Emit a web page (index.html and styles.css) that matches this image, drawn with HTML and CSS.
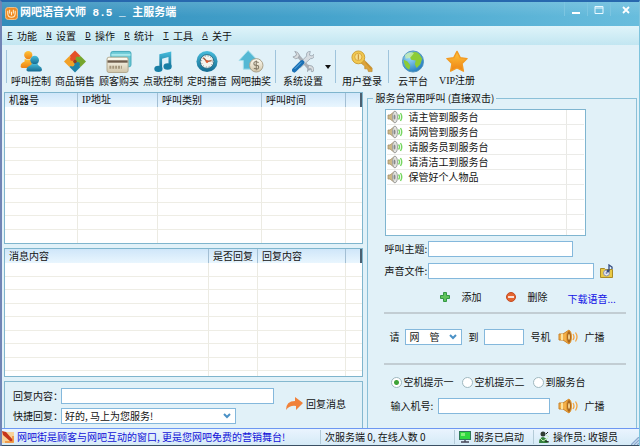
FILE: index.html
```html
<!DOCTYPE html>
<html lang="zh-CN">
<head>
<meta charset="utf-8">
<title>网吧语音大师 8.5 _ 主服务端</title>
<link rel="stylesheet" href="styles.css">
</head>
<body>
<svg class="defs" aria-hidden="true">
  <defs>
    <linearGradient id="g-blue" x1="0" y1="0" x2="0" y2="1"><stop offset="0" stop-color="#48bedd"/><stop offset="1" stop-color="#14698f"/></linearGradient>
    <linearGradient id="g-gold" x1="0" y1="0" x2="0" y2="1"><stop offset="0" stop-color="#ffc63a"/><stop offset="1" stop-color="#ee8114"/></linearGradient>
    <linearGradient id="g-sand" x1="0" y1="0" x2="0" y2="1"><stop offset="0" stop-color="#fffdf3"/><stop offset="1" stop-color="#d0c5a9"/></linearGradient>
    <radialGradient id="g-globe" cx=".35" cy=".3" r=".8"><stop offset="0" stop-color="#9fdcfa"/><stop offset="1" stop-color="#1975bb"/></radialGradient>
    <symbol id="horn" viewBox="0 0 20 16">
      <path d="M1 5h4l6-4q3 7 0 14l-6-4H1z" fill="#f3b04a" stroke="#c9822a"/>
      <path d="M4 5v6" stroke="#fce2a0" stroke-width="2"/>
      <ellipse cx="11" cy="8" rx="2.5" ry="6.5" fill="#a9671f" stroke="#e79a31"/>
      <ellipse cx="11" cy="8" rx="1" ry="3" fill="#f5d28d"/>
      <path d="M15 5q2 3 0 6M17.500 3.500q3 4.500 0 9" fill="none" stroke="#f2a340" stroke-width="1.300"/>
    </symbol>
    <symbol id="speaker" viewBox="0 0 16 14">
      <path d="M1 5h2l5-4v12L3 9H1z" fill="#cdb886" stroke="#a3916c" stroke-width=".8"/>
      <ellipse cx="8" cy="7" rx="2.500" ry="5.800" fill="#e2e2dd" stroke="#a2a2a2"/>
      <ellipse cx="7.500" cy="7" rx="1" ry="2.500" fill="#888"/>
      <path d="M11.500 4.500q2 2.500 0 5M13.500 3q2.500 4 0 8" fill="none" stroke="#76d660" stroke-width="1.400"/>
    </symbol>
  </defs>
</svg>
<div class="window">
  <header class="titlebar">
    <svg class="logo" viewBox="0 0 14 14"><rect x=".5" y=".5" width="13" height="13" rx="3" fill="#ef8b24" stroke="#f7c58b"/><path d="M3 4v3q0 4 4 4t4-4V4M5 3v4M7 5v4M9 3v4" fill="none" stroke="#fff0d0" stroke-width="1.100"/></svg>
    <h1>网吧语音大师 8.5 _ 主服务端</h1>
    <div class="controls">
      <button aria-label="最小化"><svg viewBox="0 0 12 10"><path d="M2 8h8" stroke="#fff" stroke-width="2"/></svg></button>
      <button aria-label="最大化"><svg viewBox="0 0 12 10"><path d="M2 1.500h8v7H2zM2 3h8" fill="none" stroke="#e9f8ff"/></svg></button>
      <button class="close" aria-label="关闭"><svg viewBox="0 0 12 10"><path d="M3 2l6 6M9 2L3 8" stroke="#fff" stroke-width="1.800"/></svg></button>
    </div>
  </header>
  <nav class="menu">
    <button><u>F</u>功能</button><button><u>N</u>设置</button><button><u>D</u>操作</button><button><u>R</u>统计</button><button><u>T</u>工具</button><button><u>A</u>关于</button>
  </nav>
  <div class="toolbar">
    <i class="sep"></i>
    <button><svg viewBox="0 0 24 24"><circle cx="9" cy="5" r="4.500" fill="url(#g-gold)"/><path d="M5 9q4 2 8 0l1 4v6H2q-2-1-1-4 1-2 4-3z" fill="url(#g-gold)"/><circle cx="16" cy="10.500" r="4.700" fill="url(#g-blue)"/><path d="M13 14q3 2 6 0 0 2 2 3 3 1 3 4 0 2-2 2H9q-2 0-2-2 0-3 3-4 3-1 3-3z" fill="url(#g-blue)"/></svg>呼叫控制</button>
    <button><svg viewBox="0 0 24 24"><path d="M12 0l6 6-6 6-6-6z" fill="#e5502a"/><path d="M6 6l6 6-6 6-6-6z" fill="#f2a127"/><path d="M18 6l6 6-6 6-6-6z" fill="#75a62d"/><path d="M12 12l6 6-6 6-6-6z" fill="#1f83a7"/><circle cx="9" cy="9" r="2.400" fill="#e5502a"/><circle cx="15" cy="9" r="2.400" fill="#75a62d"/><circle cx="9" cy="15" r="2.400" fill="#f2a127"/><circle cx="15" cy="15" r="2.400" fill="#1f83a7"/><path d="M10 12q0-2 2-2t2 2-2 2-2-2" fill="#943d20"/></svg>商品销售</button>
    <button><svg class="wide" viewBox="0 0 26 24"><rect x="4.500" y="1.500" width="21" height="16" rx="2" fill="#6ac9d6" stroke="#42a7b9"/><path d="M5 5h20" stroke="#a9e8ed" stroke-width="2"/><rect x=".5" y="7.500" width="22" height="16" rx="2" fill="url(#g-sand)" stroke="#b1a78e"/><path d="M1 12h21" stroke="#6e5d4c" stroke-width="2.500"/><path d="M3 18h13" stroke="#a3957b" stroke-width="3" stroke-dasharray="2 1"/></svg>顾客购买</button>
    <button><svg viewBox="0 0 24 24"><path d="M8 4l13-3v16h-3V7l-7 2v11H8z" fill="url(#g-blue)"/><ellipse cx="7" cy="20" rx="4.500" ry="3.500" fill="#187fa5"/><ellipse cx="17" cy="17.500" rx="4.500" ry="3.500" fill="#187fa5"/></svg>点歌控制</button>
    <button><svg viewBox="0 0 24 24"><circle cx="12" cy="12" r="11.500" fill="url(#g-blue)"/><circle cx="12" cy="12" r="7.500" fill="#f4f5ef" stroke="#286b82"/><circle cx="12" cy="12" r="6" fill="none" stroke="#778" stroke-dasharray="1 2.140"/><path d="M12 12L8 8M12 12l5-1" stroke="#a35b3d" stroke-width="1.500"/><circle cx="12" cy="12" r="1.500" fill="#de5c33"/></svg>定时播音</button>
    <button><svg class="wide" viewBox="0 0 26 24"><path d="M10 .5L20 11h-5v9H5v-9H.5z" fill="#54b8d4" stroke="#a5dfeb"/><circle cx="18.500" cy="16" r="7" fill="url(#g-sand)" stroke="#a79f88"/><path d="M21 13q-5-2-5 1 0 2 2.500 2t2.500 2q0 3-5 1M18.500 11v10" fill="none" stroke="#847b67" stroke-width="1.100"/></svg>网吧抽奖</button>
    <i class="sep"></i>
    <button class="drop"><svg viewBox="0 0 24 24"><path d="M5 4l15 17" stroke="#a9afb6" stroke-width="3.500"/><path d="M3 1l3 1 2 3-1 3-3 1-3-2 3-1 1-2zM18 16l4 1 2 3-1 3-2 0 0-3-3 0-1 3z" fill="#d9dddf" stroke="#929aa3" stroke-width=".8"/><path d="M20 1l-1 4 3 1 2-2q1 5-4 5L9 19l-3-3L16 6q-1-5 4-5z" fill="#d6dce1" stroke="#929ea8" stroke-width=".8"/><path d="M2.500 21.500L11 13" stroke="#1970b5" stroke-width="5" stroke-linecap="round"/><path d="M3 20l7-7" stroke="#6cb7e6" stroke-width="1"/></svg>系统设置</button>
    <span class="arrow"></span>
    <i class="sep"></i>
    <button class="login"><svg viewBox="0 0 24 24"><path d="M13 9l10 10v4h-4l-1-3-3 0 0-3-5-4z" fill="#dca43b" stroke="#b98527" stroke-width=".7"/><circle cx="8" cy="7.500" r="7" fill="#f1c851" stroke="#cb9b2f"/><circle cx="8" cy="7" r="4" fill="#f8df8e" stroke="#d7a534"/><path d="M8 4v6M16 13l6 7" stroke="#c88e2d" stroke-width="1.200"/></svg>用户登录</button>
    <i class="sep"></i>
    <button><svg viewBox="0 0 24 24"><circle cx="12" cy="12" r="11.500" fill="url(#g-globe)" stroke="#4c91bc"/><path d="M10 3q5-3 9 1l3 5-2 6-4 4-2-4 1-4-5-1-2-4zM2 10l4 2 3 4-1 5q-5-2-6-9z" fill="#8ccc36"/><path d="M3 5q5-5 10-2L9 8 4 9z" fill="#c9edb2" opacity=".8"/></svg>云平台</button>
    <button><svg viewBox="0 0 24 24"><path d="M12 1l3.500 6.800 7.500 1-5.500 5.400 1.500 8.300-7-3.500-7 3.500 1.500-8.300L1 8.800l7.500-1z" fill="url(#g-gold)" stroke="#f29a22" stroke-linejoin="round" stroke-width="1.500"/></svg><span class="mixed">VIP注册</span></button>
  </div>
  <main>
    <div class="left">
      <div class="panel calls">
        <table>
          <colgroup><col class="c-no"><col class="c-ip"><col class="c-kind"><col class="c-time"><col></colgroup>
          <thead><tr><th>机器号</th><th class="mixed">IP地址</th><th>呼叫类别</th><th>呼叫时间</th><th></th></tr></thead>
          <tbody>
            <tr><td></td><td></td><td></td><td></td><td></td></tr><tr><td></td><td></td><td></td><td></td><td></td></tr>
            <tr><td></td><td></td><td></td><td></td><td></td></tr><tr><td></td><td></td><td></td><td></td><td></td></tr>
            <tr><td></td><td></td><td></td><td></td><td></td></tr><tr><td></td><td></td><td></td><td></td><td></td></tr>
            <tr><td></td><td></td><td></td><td></td><td></td></tr><tr><td></td><td></td><td></td><td></td><td></td></tr>
            <tr><td></td><td></td><td></td><td></td><td></td></tr><tr><td></td><td></td><td></td><td></td><td></td></tr>
          </tbody>
        </table>
      </div>
      <div class="panel messages">
        <table>
          <colgroup><col class="c-msg"><col class="c-done"><col class="c-reply"><col></colgroup>
          <thead><tr><th>消息内容</th><th>是否回复</th><th>回复内容</th><th></th></tr></thead>
          <tbody>
            <tr><td></td><td></td><td></td><td></td></tr><tr><td></td><td></td><td></td><td></td></tr>
            <tr><td></td><td></td><td></td><td></td></tr><tr><td></td><td></td><td></td><td></td></tr>
            <tr><td></td><td></td><td></td><td></td></tr><tr><td></td><td></td><td></td><td></td></tr>
            <tr><td></td><td></td><td></td><td></td></tr><tr><td></td><td></td><td></td><td></td></tr>
            <tr class="rest"><td></td><td></td><td></td><td></td></tr>
          </tbody>
        </table>
      </div>
      <form class="reply">
        <div class="fields">
          <label for="content">回复内容：</label><input id="content" type="text">
          <label for="quick">快捷回复：</label>
          <select id="quick"><option>好的, 马上为您服务!</option></select>
        </div>
        <button type="button" class="plain"><svg class="send" viewBox="0 0 18 14"><path d="M10 0l8 6-7 7V9Q5 8 1 13 1 4 10 4z" fill="#f0813a"/></svg>回复消息</button>
      </form>
    </div>
    <fieldset class="right">
      <legend>服务台常用呼叫 (直接双击)</legend>
      <ul class="list">
        <li><svg><use href="#speaker"/></svg><span>请主管到服务台</span></li>
        <li><svg><use href="#speaker"/></svg><span>请网管到服务台</span></li>
        <li><svg><use href="#speaker"/></svg><span>请服务员到服务台</span></li>
        <li><svg><use href="#speaker"/></svg><span>请清洁工到服务台</span></li>
        <li><svg><use href="#speaker"/></svg><span>保管好个人物品</span></li>
        <li></li><li></li><li></li>
      </ul>
      <div class="row topic"><label for="topic">呼叫主题:</label><input id="topic" type="text"></div>
      <div class="row file"><label for="file">声音文件:</label><input id="file" type="text">
        <button type="button" class="plain" aria-label="浏览"><svg class="folder" viewBox="0 0 14 14"><path d="M.5 4.500h4l1 1h7v8H.5z" fill="#e9c944" stroke="#a98b27"/><circle cx="6.500" cy="9" r="3" fill="#e8eaf0" stroke="#8a8fa8"/><circle cx="6.500" cy="9" r="1" fill="#7b83bd"/><path d="M9 7V1l3 2v2" fill="none" stroke="#334a80" stroke-width="1.300"/><circle cx="8" cy="7" r="1.500" fill="#334a80"/></svg></button></div>
      <div class="row actions">
        <button type="button" class="plain"><svg class="small" viewBox="0 0 10 10"><path d="M3.500.5h3v3h3v3h-3v3h-3v-3h-3v-3h3z" fill="#5fc35b" stroke="#329744"/></svg>添加</button>
        <button type="button" class="plain"><svg class="small" viewBox="0 0 10 10"><circle cx="5" cy="5" r="4.500" fill="#e5652f" stroke="#c24b22"/><path d="M2 5h6" stroke="#fff" stroke-width="1.600"/></svg>删除</button>
        <a href="#">下载语音...</a>
      </div>
      <hr>
      <div class="row page">
        <label for="role">请</label>
        <select id="role"><option>网　管</option></select>
        <label for="seat">到</label><input id="seat" type="text"><span>号机</span>
        <button type="button" class="plain cast"><svg class="horn"><use href="#horn"/></svg>广播</button>
      </div>
      <hr>
      <div class="row radios">
        <label><input type="radio" name="tip" checked>空机提示一</label>
        <label><input type="radio" name="tip">空机提示二</label>
        <label><input type="radio" name="tip">到服务台</label>
      </div>
      <div class="row number">
        <label for="number">输入机号:</label><input id="number" type="text">
        <button type="button" class="plain cast"><svg class="horn"><use href="#horn"/></svg>广播</button>
      </div>
    </fieldset>
  </main>
  <footer>
    <div class="slogan"><svg viewBox="0 0 12 12"><path d="M0 1h12v11H0z" fill="#f8d39a"/><path d="M0 0l4 1 7 8-2 2-8-7z" fill="#c5341c"/><path d="M3 11h8V5" fill="none" stroke="#ed8b33" stroke-width="1.500"/></svg>网吧街是顾客与网吧互动的窗口, 更是您网吧免费的营销舞台!</div>
    <div class="count">次服务端 0, 在线人数 0</div>
    <div class="state"><svg viewBox="0 0 12 12"><rect x=".5" y=".5" width="11" height="8" fill="#2fd73f" stroke="#31795a"/><path d="M6 9v2M2 11h8" stroke="#445" stroke-width="1.300"/><path d="M2 2h4v3H2z" fill="#84f07a"/></svg>服务已启动</div>
    <div class="operator"><svg viewBox="0 0 12 12"><circle cx="5" cy="3" r="2.500" fill="#303c32"/><path d="M1 12q0-6 4-6 3 0 5 6z" fill="#35823e"/><path d="M2 7l3 3 5-3M8 4l3 2" stroke="#c8edba" fill="none"/><path d="M7 10l4 1M8 3l2-2" stroke="#222"/></svg>操作员: 收银员</div>
    <svg class="grip" viewBox="0 0 8 8"><path d="M0 8l8-8M3 8l5-5M6 8l2-2" stroke="#8ca8cf" stroke-width="1.300"/></svg>
  </footer>
</div>
</body>
</html>
```
FILE: styles.css
```css
* { box-sizing: border-box; }

body {
  margin: 0;
  font: 10px/14px "Noto Sans CJK SC", sans-serif;
  color: #111;
  background: #3a4f63;
}

button, input, select {
  font: inherit;
  color: inherit;
  margin: 0;
  padding: 0;
}

button { background: none; border: 0; white-space: nowrap; }
svg { display: block; flex: none; }
.defs { position: absolute; width: 0; height: 0; }
.mixed { font-family: "Liberation Serif", "Noto Sans CJK SC", serif; }

.window {
  display: flex;
  flex-direction: column;
  min-height: 100vh;
  border: solid #3a4f63;
  border-width: 2px 1px 3px 2px;
  border-top-color: #2768ae;
  border-left-color: #7184b5;
  border-right-color: #7fc4dd;
  background: #e1f1f8;
}

/* Title bar */
.titlebar {
  display: flex;
  gap: 2px;
  height: 24px;
  padding-left: 3px;
  background: linear-gradient(#ffffff22, #ffffff00 60%), linear-gradient(90deg, #328dbb, #45a3cc 50%, #68bddd);
}
.logo { width: 13px; height: 13px; margin-top: 5px; }
h1 {
  flex: 1;
  margin: 0;
  font: bold 11px/22px "Liberation Mono", "Noto Sans CJK SC", monospace;
  color: #fff;
  white-space: pre;
}
.controls { display: flex; height: 14px; }
.controls button { width: 23px; padding: 2px 5px 0; border-left: 1px solid #7cc5e1; }
.controls svg { width: 12px; height: 10px; }
.controls .close { width: 29px; padding-left: 9px; }

/* Menu */
.menu {
  display: flex;
  gap: 9px;
  height: 19px;
  padding-left: 5px;
  background: linear-gradient(#dff4fa, #c2e6f1);
}
.menu button { display: flex; align-items: center; gap: 4px; }
.menu u { width: 6px; font: 9px/12px "Liberation Mono", monospace; }

/* Toolbar */
.toolbar {
  display: flex;
  height: 46px;
  padding: 5px 0 0 2px;
  background: #e1f1f8;
}
.toolbar button {
  display: flex;
  flex-direction: column;
  align-items: center;
  gap: 1px;
  width: 44px;
  line-height: 14px;
}
.toolbar button svg { width: 22px; height: 23px; }
.toolbar button .wide { width: 26px; }
.toolbar .sep { flex: none; width: 1px; height: 33px; margin: 0 2px; background: #9fc4dc; }
.toolbar .drop { margin-left: 3px; }
.toolbar .login { width: 48px; }
.arrow {
  width: 6px;
  height: 4px;
  margin: 15px 2px 0 0;
  background: #111;
  clip-path: polygon(0 0, 100% 0, 50% 100%);
}

/* Work area */
main {
  flex: 1;
  display: grid;
  grid-template-columns: minmax(0, 360fr) minmax(0, 270fr);
  gap: 4px;
  padding: 1px 2px 0;
}
.left { display: flex; flex-direction: column; gap: 4px; }
.panel { display: flex; border: 1px solid #7fb5cd; background: #fff; overflow: hidden; }
.calls { height: 152px; }
.messages { flex: 1; min-height: 129px; }

table { width: 100%; table-layout: fixed; border-collapse: separate; border-spacing: 0; }
th, td { padding: 0; border-right: 1px solid #ecebe3; }
td { border-bottom: 1px solid #eeede5; }
th:last-child, td:last-child { border-right: 0; }
tr:last-child td { border-bottom: 0; }
th {
  height: 14px;
  padding-left: 4px;
  font-weight: normal;
  line-height: 14px;
  text-align: left;
  white-space: nowrap;
  background: linear-gradient(#cfe6f9, #e9f6fe);
  border-right-color: #a3bfd4;
}
th:last-child { border-right: 2px solid #4b6070; }
tbody tr { height: 14px; }
tbody tr:nth-child(even) { height: 13px; }
tbody .rest { height: auto; }
.c-no { width: 73px; }
.c-ip { width: 80px; }
.c-kind { width: 104px; }
.c-time { width: 84px; }
.c-msg { width: 204px; }
.c-done { width: 49px; }
.c-reply { width: 88px; }

input[type="text"], select {
  min-width: 0;
  height: 16px;
  border: 1px solid #84b8dc;
  border-radius: 0;
  background-color: #fff;
}
select {
  appearance: none;
  padding: 0 14px 0 3px;
  line-height: 14px;
  background: #fff url("data:image/svg+xml,%3Csvg xmlns='http://www.w3.org/2000/svg' width='8' height='6'%3E%3Cpath d='M1 1l3 3 3-3' fill='none' stroke='%234b91c6' stroke-width='2'/%3E%3C/svg%3E") no-repeat right 4px center;
}
.plain { display: flex; align-items: center; }
label { white-space: nowrap; }

.reply {
  display: flex;
  align-items: flex-start;
  gap: 11px;
  height: 47px;
  padding: 6px 8px 0;
  border: 1px solid #84b8cf;
  border-bottom: 0;
}
.fields {
  display: grid;
  grid-template-columns: 48px minmax(0, 213px);
  row-gap: 4px;
  align-items: center;
}
.fields select { width: 82%; }
.reply .plain { gap: 3px; height: 32px; }
.send { width: 18px; height: 14px; }

/* Call panel */
.right {
  min-width: 0;
  margin: 0;
  padding: 5px 10px 0 16px;
  border: 1px solid #8bc0d8;
  border-bottom: 0;
}
legend { margin-left: -11px; padding: 0 2px; line-height: 12px; }
.list {
  width: 83%;
  margin: 0 0 0 1px;
  padding: 0 1px 5px;
  list-style: none;
  border: 1px solid #7fb5d0;
  background: linear-gradient(90deg, transparent 180px, #e9e9e5 180px, #e9e9e5 181px, transparent 181px) #fff;
}
.list li {
  display: flex;
  align-items: center;
  gap: 5px;
  height: 15px;
  border-bottom: 1px solid #ebebe8;
}
.list svg { width: 16px; height: 14px; }
.row { display: flex; align-items: center; }
.topic { margin-top: 5px; }
.file { margin-top: 6px; }
.topic label, .file label { width: 44px; }
.topic input { width: 145px; }
.file input { width: 166px; margin-right: 6px; }
.folder { width: 14px; height: 14px; }
.actions { gap: 25px; height: 20px; margin: 8px 0 0 56px; }
.actions .plain { gap: 11px; }
.small { width: 10px; height: 10px; }
.actions a { margin: 4px 0 0 -5px; color: #1212e6; text-decoration: none; white-space: nowrap; }
hr { height: 2px; margin: 5px 0 0; border: 0; background: #c2cdd3; }
.page { margin-top: 15px; padding-left: 5px; gap: 6px; }
.page select { width: 57px; }
.page #seat { width: 40px; }
.page .cast { margin-left: 2px; }
.cast { gap: 6px; }
.horn { width: 20px; height: 16px; }
.page + hr { margin-top: 18px; }
.radios { gap: 9px; margin-top: 10px; padding-left: 7px; }
.radios label { display: flex; align-items: center; gap: 1px; }
input[type="radio"] {
  appearance: none;
  width: 11px;
  height: 11px;
  border: 1px solid #9fb8bf;
  border-radius: 50%;
  background: #fff;
}
input[type="radio"]:checked { background: radial-gradient(circle, #3fa338 2px, #fff 3px); }
.number { margin-top: 9px; padding-left: 6px; }
.number label { width: 48px; }
.number input { width: 112px; margin-right: 8px; }

/* Status bar */
footer {
  display: grid;
  grid-template-columns: 318fr 134fr 79fr 98fr 8px;
  align-items: center;
  height: 17px;
  border-top: 1px solid #6d97f2;
  background: linear-gradient(#eaf4fe, #d5eaf6);
  white-space: nowrap;
}
footer div { display: flex; align-items: center; gap: 3px; padding-left: 4px; border-left: 1px solid #b4cbd8; }
footer div svg { width: 12px; height: 12px; }
footer .slogan { padding-left: 0; border-left: 0; color: #1212d8; }
.grip { width: 8px; height: 8px; align-self: end; }
```
